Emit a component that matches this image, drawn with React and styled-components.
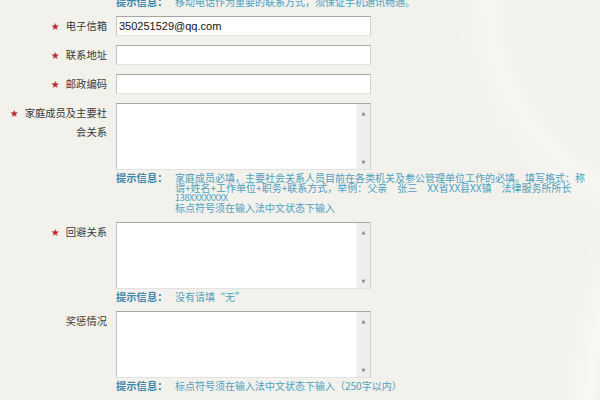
import React from "react";
import styled, { createGlobalStyle } from "styled-components";

const GlobalStyle = createGlobalStyle`
    html, body {
        margin: 0;
        padding: 0;
        background: #f3f2ee;
    }
`;

const rows = [
    { label: "电子信箱", required: true, type: "input", value: "350251529@qq.com" },
    { label: "联系地址", required: true, type: "input" },
    { label: "邮政编码", required: true, type: "input" },
    {
        label: "家庭成员及主要社会关系",
        required: true,
        type: "area",
        hint: [
            "家庭成员必填，主要社会关系人员目前在各类机关及参公管理单位工作的必填。填写格式：称",
            "谓+姓名+工作单位+职务+联系方式，举例：父亲　张三　XX省XX县XX镇　法律服务所所长",
            "138XXXXXXXX",
            "标点符号须在输入法中文状态下输入",
        ],
    },
    { label: "回避关系", required: true, type: "area", hint: ["没有请填“无”"] },
    {
        label: "奖惩情况",
        required: false,
        type: "area",
        hint: ["标点符号须在输入法中文状态下输入（250字以内）"],
    },
    // next row, only its top border shows at the bottom edge
    { label: "", required: false, type: "input" },
];

const App = () => {
    return (
        <Page>
            <GlobalStyle />
            <Form>
                <Row>
                    <span />
                    <Field>
                        <Hint $first>
                            <HintLabel>提示信息：</HintLabel>
                            <HintText>
                                移动电话作为重要的联系方式，须保证手机通讯畅通。
                            </HintText>
                        </Hint>
                    </Field>
                </Row>
                {rows.map((row, idx) => (
                    <Row key={idx}>
                        <Label>
                            {row.required && <Star>★</Star>}
                            {row.label}
                        </Label>
                        <Field>
                            {row.type === "input" ? (
                                <Input defaultValue={row.value || ""} />
                            ) : (
                                <AreaBox>
                                    <Area />
                                    <Scrollbar>
                                        <Arrow>▲</Arrow>
                                        <Arrow>▼</Arrow>
                                    </Scrollbar>
                                </AreaBox>
                            )}
                            {row.hint && (
                                <Hint>
                                    <HintLabel>提示信息：</HintLabel>
                                    <HintText>
                                        {row.hint.map((line, i) => (
                                            <HintLine key={i} $small={/^\d/.test(line)}>
                                                {line}
                                            </HintLine>
                                        ))}
                                    </HintText>
                                </Hint>
                            )}
                        </Field>
                    </Row>
                ))}
            </Form>
        </Page>
    );
};
export default App;

const Page = styled.div`
    width: 600px;
    height: 400px;
    overflow: hidden;
    background-color: #f2f1ec;
    /* faint swooshes on the right side */
    background-image:
        radial-gradient(ellipse 360px 480px at 820px 420px, rgba(255, 255, 255, 0) 0 60%, rgba(255, 255, 255, 0.45) 64%, rgba(255, 255, 255, 0) 74%),
        radial-gradient(ellipse 300px 300px at 700px 0px, rgba(255, 255, 255, 0) 0 62%, rgba(255, 255, 255, 0.35) 70%, rgba(255, 255, 255, 0) 82%);
    font-family: "Liberation Sans", "Noto Sans CJK SC", sans-serif;
    color: #333333;
`;

const Form = styled.div`
    display: flex;
    flex-direction: column;
    gap: 9px;
`;

const Row = styled.div`
    display: grid;
    grid-template-columns: 107px 255px;
    column-gap: 9px;
    align-items: start;
`;

const Label = styled.div`
    box-sizing: border-box;
    padding: 1px 0 0 6px;
    text-align: right;
    font-family: "Noto Sans CJK SC", sans-serif;
    font-size: 10.3px;
    line-height: 18px;
    color: #3a3a3a;
`;

const Star = styled.span`
    color: #c1272d;
    font-family: "DejaVu Sans", sans-serif;
    font-size: 10px;
    margin-right: 6px;
`;

const Field = styled.div`
    display: flex;
    flex-direction: column;
`;

const Input = styled.input`
    box-sizing: border-box;
    width: 255px;
    height: 20px;
    margin: 0;
    padding: 0 2px;
    border: 1px solid;
    border-color: #a6a6a6 #cfcfcf #e2e2e2 #c6c6c6;
    background: #ffffff;
    font-family: "Liberation Sans", sans-serif;
    font-size: 11px;
    color: #111111;
    outline: none;
`;

const AreaBox = styled.div`
    box-sizing: border-box;
    display: flex;
    width: 255px;
    height: 67px;
    border: 1px solid;
    border-color: #a6a6a6 #cfcfcf #e2e2e2 #c6c6c6;
    background: #ffffff;
`;

const Area = styled.textarea`
    flex: 1;
    border: none;
    margin: 0;
    padding: 2px;
    resize: none;
    outline: none;
    background: transparent;
    font-family: "Liberation Sans", sans-serif;
    font-size: 11px;
`;

const Scrollbar = styled.div`
    width: 13px;
    flex: none;
    display: flex;
    flex-direction: column;
    justify-content: space-between;
    align-items: center;
    padding: 6px 0 4px;
    background: #eeeeec;
    border-left: 1px solid #f8f8f8;
`;

const Arrow = styled.span`
    font-family: "DejaVu Sans", sans-serif;
    font-size: 5px;
    line-height: 6px;
    color: #8a8a8a;
`;

const Hint = styled.div`
    display: flex;
    margin-top: ${(p) => (p.$first ? "-3px" : "3px")};
    width: 480px;
    font-family: "Noto Sans CJK SC", sans-serif;
    font-size: 10px;
    line-height: 10px;
`;

const HintLabel = styled.span`
    flex: none;
    width: 59px;
    font-size: 10.3px;
    font-weight: bold;
    color: #3b88aa;
`;

const HintText = styled.div`
    color: #4f9fbf;
    white-space: nowrap;
`;

const HintLine = styled.div`
    font-size: ${(p) => (p.$small ? "9px" : "inherit")};
    letter-spacing: ${(p) => (p.$small ? "-0.3px" : "0")};
`;
